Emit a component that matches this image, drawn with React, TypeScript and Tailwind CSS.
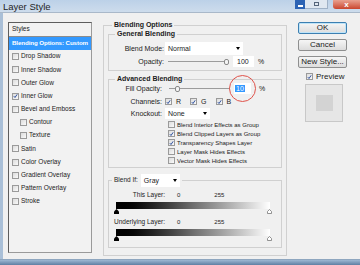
import React from "react"

const styleItems: { label: string; checked?: boolean; indent?: boolean }[] = [
  { label: "Drop Shadow" },
  { label: "Inner Shadow" },
  { label: "Outer Glow" },
  { label: "Inner Glow", checked: true },
  { label: "Bevel and Emboss" },
  { label: "Contour", indent: true },
  { label: "Texture", indent: true },
  { label: "Satin" },
  { label: "Color Overlay" },
  { label: "Gradient Overlay" },
  { label: "Pattern Overlay" },
  { label: "Stroke" },
]

const advancedChecks = [
  { label: "Blend Interior Effects as Group", checked: false },
  { label: "Blend Clipped Layers as Group", checked: true },
  { label: "Transparency Shapes Layer", checked: true },
  { label: "Layer Mask Hides Effects", checked: false },
  { label: "Vector Mask Hides Effects", checked: false },
]

function Check({ checked = false }: { checked?: boolean }) {
  return (
    <span className="flex h-[7px] w-[7px] shrink-0 items-center justify-center border border-[#9a9a9a] bg-gradient-to-br from-[#dcdcdc] to-[#fafafa]">
      {checked && (
        <svg width="6" height="6" viewBox="0 0 6 6">
          <path d="M1 3.2 L2.4 4.8 L5 1" fill="none" stroke="#2d4f9e" strokeWidth="1.2" />
        </svg>
      )}
    </span>
  )
}

function SelectBox({ value, width }: { value: string; width: string }) {
  return (
    <div className={`flex h-full items-center justify-between bg-white pl-[3px] pr-[3px] ${width}`}>
      <span>{value}</span>
      <span className="h-0 w-0 border-x-[2.5px] border-t-[3px] border-x-transparent border-t-black" />
    </div>
  )
}

function Slider({ left, width }: { left: number; width: string }) {
  return (
    <div className={`flex items-center ${width}`}>
      <div className="h-px bg-[#9c9c9c]" style={{ width: left }} />
      <span className="h-[6px] w-[5px] shrink-0 rounded-[2px] border border-[#8a8a8a] bg-[#f4f4f4]" />
      <div className="h-px flex-1 bg-[#9c9c9c]" />
    </div>
  )
}

function Btn({ children, primary }: { children: React.ReactNode; primary?: boolean }) {
  return (
    <div
      className={`flex h-[12px] w-[49px] items-center justify-center rounded-[2px] border bg-gradient-to-b from-[#f6f6f6] to-[#dcdcdc] text-[8px] ${
        primary ? "border-[#3c7fb1] shadow-[inset_0_0_0_1px_#bfe4f8]" : "border-[#8e8f8f]"
      }`}
    >
      {children}
    </div>
  )
}

function GradientRow() {
  return (
    <>
      <div className="ml-[7px] mt-[3px] h-[7px] w-[154px] bg-gradient-to-r from-black via-[#6e6e6e] to-white" />
      <div className="ml-[5px] flex h-[5px] w-[158px] justify-between">
        <svg width="5" height="5" viewBox="0 0 5 5">
          <path d="M2.5 0 L5 2.5 L5 5 L0 5 L0 2.5 Z" fill="#000" />
        </svg>
        <svg width="5" height="5" viewBox="0 0 5 5">
          <path d="M2.5 0.5 L4.5 2.5 L4.5 4.5 L0.5 4.5 L0.5 2.5 Z" fill="#fff" stroke="#777" strokeWidth="0.8" />
        </svg>
      </div>
    </>
  )
}

export default function App() {
  return (
    <div className="flex h-[265px] w-[360px] flex-col overflow-hidden bg-[#f0f0f0] font-['Liberation_Sans',sans-serif] text-[7px] leading-none text-[#1b1b1b]">
      {/* title bar */}
      <div className="flex h-[13px] shrink-0 items-start justify-between border-b border-[#a9b8c9] bg-gradient-to-b from-[#bcd1e8] to-[#cddcec]">
        <span className="pl-[3px] pt-[1px] text-[9.5px] leading-[11px] text-[#1f1f1f]">Layer Style</span>
        <div className="flex h-[9px] items-stretch">
          <div className="flex w-[10px] items-end justify-center bg-[#2c63b4] pb-[2px]">
            <span className="h-[2px] w-[5px] bg-white" />
          </div>
          <div className="flex w-[23px] items-center justify-center border-b border-r border-[#9fb1c6] bg-[#dfe7f0]">
            <span className="h-[4px] w-[5px] border border-[#55657a]" />
          </div>
          <div className="ml-[5px] flex w-[27px] items-center justify-center rounded-bl-[3px] bg-gradient-to-b from-[#e8a08f] to-[#c9442c] text-[8px] font-bold text-white">
            x
          </div>
        </div>
      </div>

      {/* body */}
      <div className="flex flex-1 border-l-[3px] border-[#a9bfd7]">
        {/* styles list */}
        <div className="ml-[5px] mt-[9px] flex h-[231px] w-[84px] flex-col border border-[#5d5d5d] border-b-[#9a9a9a] border-r-[#9a9a9a] bg-[#f2f2f2] text-[6.5px]">
          <div className="flex h-[14px] items-center border-b border-[#8c8c8c] pl-[3px]">Styles</div>
          <div className="flex h-[13px] items-center whitespace-nowrap bg-[#3399ff] pl-[3px] text-[6.2px] font-bold tracking-[-0.1px] text-white">
            Blending Options: Custom
          </div>
          {styleItems.map((s) => (
            <div key={s.label} className={`flex h-[13.2px] items-center gap-[2px] whitespace-nowrap ${s.indent ? "pl-[11px]" : "pl-[3px]"}`}>
              <Check checked={s.checked} />
              <span>{s.label}</span>
            </div>
          ))}
        </div>

        {/* main options */}
        <fieldset className="ml-[11px] mt-[8px] h-[235px] w-[184px] border border-[#d0d0d0] px-[4px]">
          <legend className="ml-[4px] px-[2px] text-[7px] font-bold leading-[8px]">Blending Options</legend>

          <fieldset className="mt-[1px] h-[41px] border border-[#d0d0d0]">
            <legend className="ml-[6px] px-[2px] font-bold leading-[8px]">General Blending</legend>
            <div className="mt-[4px] flex h-[13px] items-center">
              <span className="w-[55px] text-right">Blend Mode:</span>
              <div className="ml-[1px] h-full">
                <SelectBox value="Normal" width="w-[78px]" />
              </div>
            </div>
            <div className="mt-[1px] flex h-[11px] items-center">
              <span className="w-[55px] text-right">Opacity:</span>
              <div className="ml-[4px]">
                <Slider left={56} width="w-[61px]" />
              </div>
              <div className="ml-[4px] flex h-full w-[21px] items-center bg-white pl-[4px]">100</div>
              <span className="ml-[4px]">%</span>
            </div>
          </fieldset>

          <fieldset className="mt-[4px] h-[93px] border border-[#d0d0d0]">
            <legend className="ml-[6px] px-[2px] font-bold leading-[8px]">Advanced Blending</legend>
            <div className="flex h-[11px] items-center">
              <span className="w-[53px] text-right">Fill Opacity:</span>
              <div className="ml-[7px]">
                <Slider left={6} width="w-[61px]" />
              </div>
              <div className="relative ml-[4px] flex h-full w-[17px] items-center bg-white pl-[1px]">
                <span className="bg-[#3399ff] px-[1px] text-white">10</span>
                <span className="absolute left-[-5px] top-[-8px] h-[27px] w-[27px] rounded-full border-[1.2px] border-[#e0524a]" />
              </div>
              <span className="ml-[8px]">%</span>
            </div>
            <div className="mt-[3px] flex h-[9px] items-center">
              <span className="w-[53px] text-right">Channels:</span>
              <div className="ml-[3px] flex items-center gap-[4px]">
                <Check checked />
                <span>R</span>
              </div>
              <div className="ml-[9px] flex items-center gap-[4px]">
                <Check checked />
                <span>G</span>
              </div>
              <div className="ml-[9px] flex items-center gap-[4px]">
                <Check checked />
                <span>B</span>
              </div>
            </div>
            <div className="mt-[2px] flex h-[11px] items-center">
              <span className="w-[53px] text-right">Knockout:</span>
              <div className="ml-[3px] h-full">
                <SelectBox value="None" width="w-[45px]" />
              </div>
            </div>
            <div className="mt-[1px] flex flex-col pl-[59px]">
              {advancedChecks.map((c) => (
                <div key={c.label} className="flex h-[9px] items-center gap-[2px] whitespace-nowrap">
                  <Check checked={c.checked} />
                  <span className="text-[6px]">{c.label}</span>
                </div>
              ))}
            </div>
          </fieldset>

          <fieldset className="mt-[6px] h-[74px] border border-[#d0d0d0]">
            <legend className="ml-[3px] flex h-[13px] items-center px-[2px]">
              <span className="text-[6.5px]">Blend If:</span>
              <div className="ml-[3px] h-full">
                <SelectBox value="Gray" width="w-[39px]" />
              </div>
            </legend>
            <div className="mt-[4px] flex h-[8px] items-center">
              <span className="w-[56px] text-right text-[6.5px]">This Layer:</span>
              <span className="ml-[12px] text-[6px]">0</span>
              <span className="ml-[34px] text-[6px]">255</span>
            </div>
            <GradientRow />
            <div className="mt-[4px] flex h-[8px] items-center">
              <span className="w-[56px] text-right text-[6.5px]">Underlying Layer:</span>
              <span className="ml-[12px] text-[6px]">0</span>
              <span className="ml-[34px] text-[6px]">255</span>
            </div>
            <GradientRow />
          </fieldset>
        </fieldset>

        {/* buttons */}
        <div className="ml-[11px] mt-[9px] flex flex-col">
          <Btn primary>OK</Btn>
          <div className="mt-[5px]">
            <Btn>Cancel</Btn>
          </div>
          <div className="mt-[5px]">
            <Btn>New Style...</Btn>
          </div>
          <div className="mt-[4px] flex h-[9px] items-center gap-[3px] pl-[8px] text-[8px]">
            <Check checked />
            <span>Preview</span>
          </div>
          <div className="ml-[7px] mt-[3px] flex h-[38px] w-[38px] items-center justify-center border border-[#c8c8c8] bg-[#e6e6e6]">
            <span className="h-[16px] w-[17px] bg-[#d3d3d3]" />
          </div>
        </div>
      </div>

      {/* window frame bottom */}
      <div className="h-[6px] shrink-0 border-t border-[#8ea6bf] bg-gradient-to-b from-[#9db7d2] to-[#5f7fa3]" />
    </div>
  )
}
